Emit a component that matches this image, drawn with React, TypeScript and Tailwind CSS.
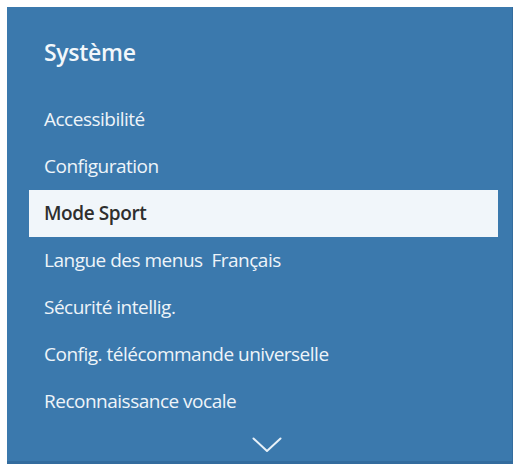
import React from "react";

const items = [
  "Accessibilité",
  "Configuration",
  "Mode Sport",
  "Langue des menus\u00a0\u00a0Français",
  "Sécurité intellig.",
  "Config. télécommande universelle",
  "Reconnaissance vocale",
];

export default function App() {
  return (
    <div className="w-[526px] h-[471px] bg-white pt-[7px] pl-[7px]" style={{ fontFamily: '"Open Sans", "Liberation Sans", sans-serif' }}>
      <div className="w-[506px] h-[457px] bg-[#3b79ad] flex flex-col border-b-[3px] border-r border-[#336c9e]">
        <div className="pl-[37px] pt-[33px] text-[23px] leading-[24px] font-semibold text-[#f2f7fb] tracking-[-0.3px]">Système</div>
        <div className="mt-[32px] flex flex-col">
          {items.map((t, i) =>
            i === 2 ? (
              <div key={i} className="ml-[22px] mr-[14px] h-[47px] flex items-center pl-[15px] bg-[#f1f6fa] text-[#2e2e2e] font-semibold text-[19px] tracking-[-0.4px]">
                {t}
              </div>
            ) : (
              <div key={i} className="ml-[22px] mr-[14px] h-[47px] flex items-center pl-[15px] text-[#eef4f9] font-medium text-[19px] tracking-[-0.5px]">
                {t}
              </div>
            )
          )}
        </div>
        <div className="flex justify-center mt-[auto] mb-[8px] pl-[15px]">
          <svg width="30" height="16" viewBox="0 0 30 16" fill="none">
            <path d="M1.5 1.5 L15 14 L28.5 1.5" stroke="#e8f1f8" strokeWidth="2" strokeLinecap="round" strokeLinejoin="round" />
          </svg>
        </div>
      </div>
    </div>
  );
}
